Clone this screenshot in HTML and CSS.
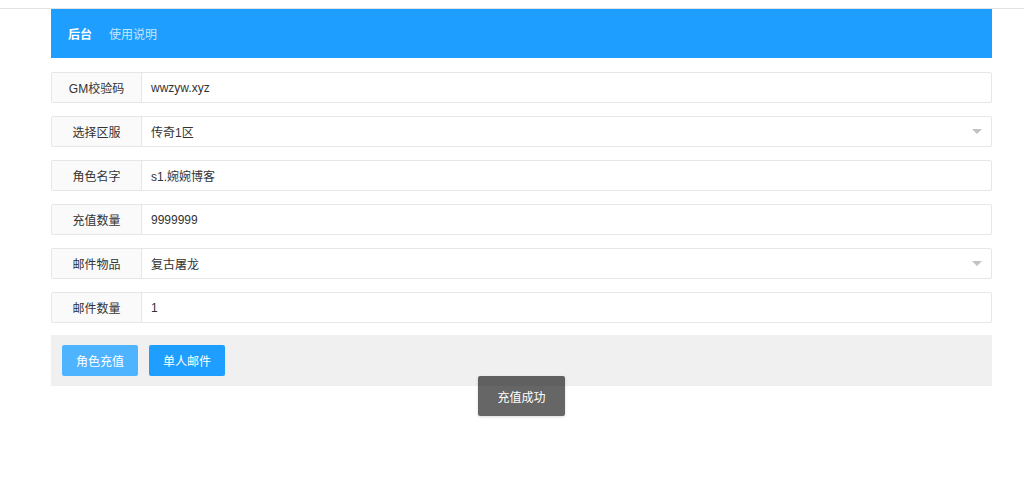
FILE: index.html
```html
<!DOCTYPE html>
<html lang="zh-CN">
<head>
<meta charset="utf-8">
<title>后台</title>
<link rel="stylesheet" href="styles.css">
</head>
<body>
<div class="page">
  <div class="wrap">
    <div class="header">
      <span class="nav-item active">后台</span>
      <span class="nav-item">使用说明</span>
    </div>
    <form class="form">
      <div class="row">
        <label class="label">GM校验码</label>
        <div class="field">wwzyw.xyz</div>
      </div>
      <div class="row">
        <label class="label">选择区服</label>
        <div class="field select">传奇1区<span class="caret"></span></div>
      </div>
      <div class="row">
        <label class="label">角色名字</label>
        <div class="field">s1.婉婉博客</div>
      </div>
      <div class="row">
        <label class="label">充值数量</label>
        <div class="field">9999999</div>
      </div>
      <div class="row">
        <label class="label">邮件物品</label>
        <div class="field select">复古屠龙<span class="caret"></span></div>
      </div>
      <div class="row">
        <label class="label">邮件数量</label>
        <div class="field">1</div>
      </div>
      <div class="actions">
        <button type="button" class="btn btn-light">角色充值</button>
        <button type="button" class="btn">单人邮件</button>
      </div>
    </form>
  </div>
  <div class="toast">充值成功</div>
</div>
</body>
</html>
```
FILE: styles.css
```css
* { box-sizing: border-box; }
html, body {
  margin: 0;
  padding: 0;
  background: #fff;
  font-family: "Liberation Sans", "Noto Sans CJK SC", sans-serif;
  font-size: 12px;
  color: #333;
}
.page {
  position: relative;
  height: 498px;
  padding-top: 8px;
}
.wrap {
  border-top: 1px solid #e2e2e2;
  padding-left: 51px;
  padding-right: 32px;
}
.header {
  height: 49px;
  background: #1e9fff;
  display: flex;
  align-items: center;
  padding-left: 17px;
  gap: 17px;
}
.nav-item {
  color: rgba(255,255,255,0.75);
  font-size: 12px;
}
.nav-item.active {
  color: #fff;
  font-weight: bold;
}
.form {
  margin-top: 14px;
  display: flex;
  flex-direction: column;
  gap: 13px;
}
.row {
  display: flex;
  height: 31px;
  border: 1px solid #e6e6e6;
  border-radius: 2px;
}
.label {
  width: 90px;
  flex: none;
  background: #fafafa;
  border-right: 1px solid #e6e6e6;
  display: flex;
  align-items: center;
  justify-content: center;
  color: #333;
}
.field {
  flex: 1;
  display: flex;
  align-items: center;
  padding-left: 9px;
  color: #333;
  position: relative;
}
.caret {
  position: absolute;
  right: 9px;
  top: 12px;
  width: 0;
  height: 0;
  border-left: 5px solid transparent;
  border-right: 5px solid transparent;
  border-top: 5px solid #c2c2c2;
}
.actions {
  margin-top: -1px;
  height: 51px;
  background: #f0f0f0;
  display: flex;
  align-items: center;
  padding-left: 11px;
  gap: 11px;
}
.btn {
  height: 31px;
  width: 76px;
  border: none;
  border-radius: 2px;
  background: #1e9fff;
  color: #fff;
  font-family: inherit;
  font-size: 12px;
  padding: 0;
}
.btn-light {
  background: #4fb4ff;
}
.toast {
  position: absolute;
  left: 478px;
  top: 376px;
  width: 87px;
  height: 40px;
  background: rgba(0,0,0,0.6);
  color: #fff;
  border-radius: 2px;
  display: flex;
  align-items: center;
  justify-content: center;
  font-size: 12px;
  box-shadow: 0 1px 3px rgba(0,0,0,0.15);
}
```
